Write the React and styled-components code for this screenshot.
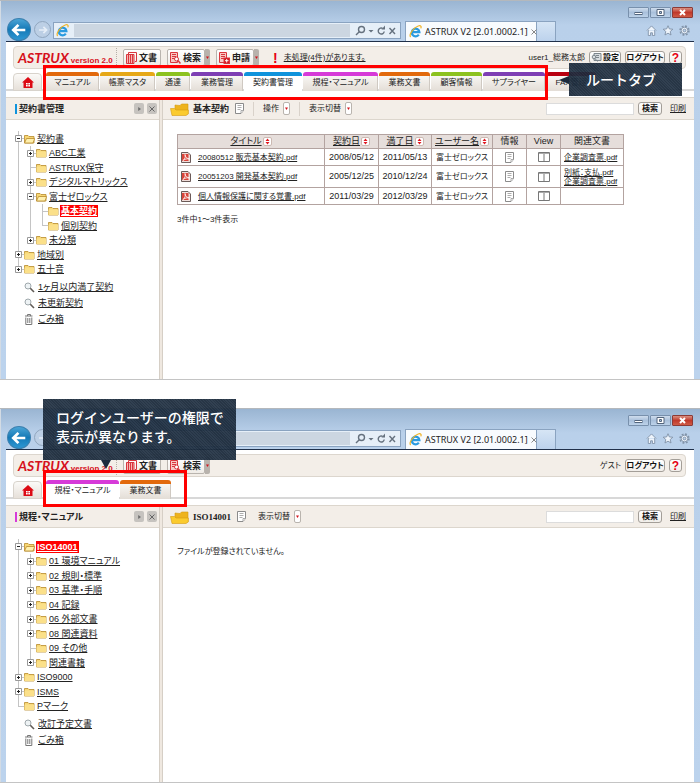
import React from 'react'
import styled, { createGlobalStyle, css } from 'styled-components'

const GlobalStyle = createGlobalStyle`
    * {
        box-sizing: border-box;
    }
    body {
        margin: 0;
        background: #fff;
        color: #222;
        font-family: 'Liberation Sans', 'Noto Sans CJK JP', sans-serif;
        font-size: 8px;
        line-height: 12px;
        font-feature-settings: 'palt';
    }
    button, input {
        font: inherit;
        color: inherit;
        font-feature-settings: inherit;
        margin: 0;
        padding: 0;
    }
    a {
        color: inherit;
    }
    svg {
        display: block;
        flex: none;
    }
`

const Page = styled.main`
    display: flex;
    flex-direction: column;
    gap: 28px;
`
const Browser = styled.section`
    position: relative;
    border-top: 1px solid #b4b8bc;
    border-bottom: 1px solid #c4c4c4;
    background: linear-gradient(#9ab5d2, #b9d0ea 24px, #bcd3ed);
    padding: 0 6px;
    box-shadow: inset 1px 0 #d3dbe4;
`
const TitleBar = styled.div`
    display: flex;
    justify-content: flex-end;
    gap: 1px;
    height: 17px;
    padding: 6px 1px 0 0;
`
const WindowButton = styled.button`
    display: flex;
    align-items: center;
    justify-content: center;
    width: 21px;
    height: 11px;
    border: 1px solid ${props => props.$close ? '#8d3a35' : '#7890ac'};
    border-radius: 1px;
    background: ${props => props.$close
        ? 'linear-gradient(#d98f80, #c0392b 50%, #cf5a45)'
        : 'linear-gradient(#cfdded, #a9c0db 50%, #bdd2e9)'};
`
const NavBar = styled.div`
    display: flex;
    align-items: flex-end;
    height: 23px;
`
const RoundButton = styled.button`
    flex: none;
    display: flex;
    align-items: center;
    justify-content: center;
    border-radius: 50%;
    ${props => props.$main ? css`
        width: 24px;
        height: 23px;
        margin: 0 3px 0 1px;
        border: 1px solid #3a7fae;
        background: linear-gradient(#4aa4d6, #1679b6 50%, #2d97d3);
    ` : css`
        width: 17px;
        height: 17px;
        margin: 0 2px 3px 0;
        border: 1px solid #91a6be;
        background: #bccfe5;
    `}
`
const AddressBar = styled.div`
    flex: 1;
    display: flex;
    align-items: center;
    gap: 5px;
    height: 17px;
    margin: 0 4px 2px 0;
    padding: 0 4px 0 2px;
    border: 1px solid #8aa3c0;
    background: #e6eff8;
`
const AddressInput = styled.input`
    flex: 1;
    min-width: 0;
    height: 13px;
    border: 0;
    background: #ccd6e1;
`
const BrowserTab = styled.div`
    display: flex;
    align-items: center;
    gap: 3px;
    width: 132px;
    height: 20px;
    padding: 0 4px 0 3px;
    border: 1px solid #8aa3c0;
    border-bottom: 0;
    background: #f8fbfe;
    font: 9px 'Noto Sans', sans-serif;
    white-space: nowrap;
    svg:last-child {
        margin-left: auto;
    }
`
const NewTab = styled.button`
    width: 19px;
    height: 20px;
    border: 1px solid #8aa3c0;
    border-width: 1px 1px 0 0;
    background: linear-gradient(#d6e5f5, #bcd2ec);
`
const BrowserTools = styled.div`
    display: flex;
    gap: 5px;
    padding: 0 4px 5px 90px;
`

const AppBody = styled.div`
    border-top: 1px solid #20304a;
    background: #fff;
    padding-top: 4px;
`
const Header = styled.header`
    display: flex;
    align-items: center;
    height: 23px;
    margin: 0 8px 3px 7px;
    padding: 0 3px 0 4px;
    border: 1px solid #dcd6ce;
    border-radius: 4px;
    background: #f3eee8;
`
const Logo = styled.div`
    display: flex;
    align-items: baseline;
    gap: 2px;
    width: 99px;
    height: 19px;
    border-right: 1px dotted #b5afa8;
    color: #d6101c;
    white-space: nowrap;
    font: bold 8px/19px 'Liberation Sans', sans-serif;
    em {
        font: italic bold 14px/19px Lato, sans-serif;
    }
`
const ToolGroup = styled.div`
    display: flex;
    margin-left: 6px;
`
const ToolButton = styled.button`
    display: flex;
    align-items: center;
    gap: 2px;
    width: 38px;
    height: 17px;
    padding-left: 2px;
    border: 1px solid #b9b4ae;
    border-radius: 2px;
    background: linear-gradient(#fff, #f0ece7);
    font-size: 9px;
    font-weight: bold;
    white-space: nowrap;
`
const ToolDrop = styled.button`
    display: flex;
    align-items: center;
    justify-content: center;
    width: 5px;
    height: 17px;
    border: 0;
    border-radius: 0 2px 2px 0;
    background: #b8b2ac;
`
const Notice = styled.div`
    display: flex;
    align-items: center;
    gap: 6px;
    margin-left: 14px;
    b {
        color: #e60012;
        font-size: 14px;
    }
`
const Account = styled.div`
    display: flex;
    align-items: center;
    gap: 4px;
    margin-left: auto;
`
const SmallButton = styled.button`
    display: flex;
    align-items: center;
    justify-content: center;
    gap: 1px;
    width: ${props => props.$width}px;
    height: 13px;
    border: 1px solid #a39e98;
    border-radius: 3px;
    background: linear-gradient(#fff, #f1eeea);
    color: ${props => props.$help ? '#e60012' : '#111'};
    font-size: ${props => props.$help ? 12 : 8}px;
    font-weight: bold;
    white-space: nowrap;
`

const TabBar = styled.nav`
    display: flex;
    gap: 1px;
    height: 19px;
    margin-bottom: 6px;
    padding-left: 7px;
    background: linear-gradient(#d8d8d8, #d8d8d8) bottom / 100% 2px no-repeat;
`
const HomeTab = styled.a`
    display: flex;
    align-items: center;
    justify-content: center;
    width: 29px;
    margin: 1px 3px 0 0;
    border: 1px solid #d8d3cc;
    border-radius: 4px 4px 0 0;
    background: linear-gradient(#fbfaf8, #e6e0d9);
`
const RootTab = styled.a`
    width: ${props => props.$width}px;
    border-top: 4px solid ${props => props.$color};
    border-radius: 3px 3px 0 0;
    background: ${props => props.$active ? '#fff' : 'linear-gradient(#f8f6f3, #e3ddd6)'};
    box-shadow: ${props => props.$active ? 'none' : 'inset -1px 0 #cfc9c2'};
    line-height: 14px;
    text-align: center;
    text-decoration: none;
    white-space: nowrap;
`

const Panes = styled.div`
    display: grid;
    grid-template-columns: 153px 4px 1fr;
    min-height: ${props => props.$height}px;
`
const Divider = styled.div`
    border: 1px solid #d6cfc6;
    border-width: 0 1px;
    background: #efe8e0;
`
const PaneHead = styled.div`
    display: flex;
    align-items: center;
    height: 23px;
    border: 1px solid #dcd6cd;
    border-width: 1px 0;
    background: #f3eee8;
    white-space: nowrap;
`
const SideHead = styled(PaneHead)`
    gap: 3px;
    padding: 0 2px 0 9px;
    h2 {
        flex: 1;
        margin: 0;
        padding-left: 2px;
        border-left: 2px solid ${props => props.$color};
        font-size: 9px;
        line-height: 10px;
    }
`
const SideButton = styled.button`
    display: flex;
    align-items: center;
    justify-content: center;
    width: 10px;
    height: 11px;
    border: 0;
    border-radius: 2px;
    background: #c6c3bf;
`
const MainHead = styled(PaneHead)`
    padding: 0 8px 0 7px;
    h3 {
        margin: 0 6px 0 4px;
        font-size: 9px;
        font-family: ${props => props.$serif ? "'Liberation Serif', " : ''}'Liberation Sans', 'Noto Sans CJK JP', sans-serif;
    }
`
const MenuLabel = styled.div`
    display: flex;
    align-items: center;
    gap: 4px;
    height: 14px;
    margin-left: 9px;
    padding-left: ${props => props.$plain ? 2 : 9}px;
    border-left: 1px solid ${props => props.$plain ? 'transparent' : '#d9d2ca'};
`
const MenuButton = styled.button`
    display: flex;
    align-items: center;
    justify-content: center;
    width: 7px;
    height: 13px;
    border: 1px solid #b9b4ae;
    border-radius: 2px;
    background: #fff;
`
const SearchForm = styled.form`
    display: flex;
    align-items: center;
    gap: 4px;
    margin-left: auto;
    a {
        margin-left: 4px;
    }
`
const SearchInput = styled.input`
    width: 88px;
    height: 12px;
    border: 1px solid #dcdcdc;
    background: #fff;
`

const Tree = styled.ul`
    margin: 0;
    padding: 11px 0 0 6px;
    list-style: none;
    font-size: 9px;
    white-space: nowrap;
`
const TreeRow = styled.li`
    display: flex;
    align-items: center;
    height: 15px;
    &:nth-child(even) {
        height: 14px;
    }
`
const Guide = styled.span`
    display: flex;
    align-items: center;
    justify-content: center;
    align-self: stretch;
    width: 12px;
    background-image: linear-gradient(#c4c4c4, #c4c4c4), linear-gradient(#c4c4c4, #c4c4c4);
    background-repeat: no-repeat;
    background-position: 6px 0, 6px 50%;
    background-size: 1px ${props => props.$end ? '50%' : '100%'}, ${props => props.$branch ? 6 : 0}px 1px;
`
const Toggle = styled.button`
    display: flex;
    width: 7px;
    height: 7px;
    border: 0;
    background: #fff;
`
const TreeLink = styled.a`
    margin-left: 1px;
    padding: 0 1px;
    line-height: 12px;
    ${props => props.$selected && css`
        background: #f00;
        color: #fff;
        font-weight: bold;
    `}
`
const Extras = styled.ul`
    margin: 3px 0 0;
    padding: 0 0 0 18px;
    list-style: none;
    font-size: 9px;
    li {
        display: flex;
        align-items: center;
        gap: 3px;
        height: 16px;
    }
`

const MainBody = styled.div`
    padding: 14px 14px 0;
`
const DocTable = styled.table`
    width: 447px;
    border-collapse: collapse;
    table-layout: fixed;
    font-size: 9px;
    line-height: 9px;
    white-space: nowrap;
    th, td {
        height: 17px;
        padding: 0;
        border: 1px solid #b3a3a0;
        text-align: center;
        font-weight: normal;
    }
    th {
        height: 14px;
        background: #e6dedb;
    }
    tbody tr:nth-child(2) td {
        height: 22px;
    }
    td svg {
        margin: 0 auto;
    }
    td:nth-child(4), td:last-child {
        font-size: 8px;
    }
    td:last-child {
        padding-left: 3px;
        text-align: left;
    }
    td:last-child a {
        display: block;
    }
`
const HeadCell = styled.span`
    display: flex;
    align-items: center;
    justify-content: center;
    gap: 1px;
`
const FileCell = styled.div`
    display: flex;
    gap: 7px;
    padding-left: 3px;
    align-items: center;
    font-size: 8px;
    td & svg {
        margin: 0;
    }
`
const SortButton = styled.button`
    display: flex;
    align-items: center;
    justify-content: center;
    width: 9px;
    height: 9px;
    border: 1px solid #cbb9b2;
    border-radius: 2px;
    background: #fff;
`
const Summary = styled.p`
    margin: ${props => props.$top}px 0 0;
`

const Frame = styled.div`
    position: absolute;
    left: 43px;
    top: ${props => props.$top}px;
    width: ${props => props.$width}px;
    height: ${props => props.$height}px;
    border: 3px solid #f00;
    pointer-events: none;
`
const Callout = styled.div`
    position: absolute;
    background: repeating-linear-gradient(45deg, rgba(26, 41, 58, 0.94) 0 1px, rgba(34, 50, 68, 0.93) 1px 2px);
    color: #fff;
    font: 500 14px/19px 'Noto Sans CJK JP', sans-serif;
    font-feature-settings: normal;
    white-space: nowrap;
    &::after {
        content: '';
        position: absolute;
        border: 5px solid transparent;
    }
    ${props => props.$side === 'left' ? css`
        left: 569px;
        top: 62px;
        padding: 7px 26px 7px 17px;
        &::after {
            right: 100%;
            top: 13px;
            border-width: 4px 10px 4px 0;
            border-right-color: #1b2a3c;
        }
    ` : css`
        left: 43px;
        top: -10px;
        padding: 9px 12px 14px 13px;
        &::after {
            left: 58px;
            top: 100%;
            border-width: 9px 5px 0;
            border-top-color: #1b2a3c;
        }
    `}
`

const IeIcon = () => (
    <svg width="13" height="13" viewBox="0 0 13 13" fill="none">
        <path d="M3 7.2h7.4A3.8 3.8 0 1 0 9.8 9.6" stroke="#2a9be0" strokeWidth="2.2" />
        <path d="M1.6 12C-.3 9.8 4.3 2.6 9.2 1c2.6-.9 3.4.4 2.6 2.4" stroke="#f0b323" strokeWidth="1.2" />
    </svg>
)
const SearchGlyph = () => (
    <svg width="41" height="12" viewBox="0 0 41 12" fill="none" stroke="#65717e" strokeWidth="1.4">
        <circle cx="6.5" cy="4.5" r="3" />
        <path d="M4.3 6.7L1 10" />
        <path d="M13.5 5h5l-2.5 2.5z" fill="#65717e" stroke="none" />
        <path d="M29.2 6.5a3 3 0 1 1-1.4-3" />
        <path d="M26.5 4.5h3.5v-4z" fill="#65717e" stroke="none" />
        <path d="M34.5 3l5.5 6M40 3l-5.5 6" />
    </svg>
)
const Arrow = ({ size, color, flip }) => (
    <svg width={size} height={size} viewBox="0 0 14 14" fill="none" stroke={color} strokeWidth="2.4">
        <path d={flip ? 'M1.5 7h10.5M7.5 2.5L12 7l-4.5 4.5' : 'M12.5 7H2M6.5 2.5L2 7l4.5 4.5'} />
    </svg>
)
const WindowGlyph = ({ kind }) => (
    <svg width="9" height="7" viewBox="0 0 9 7" fill="#fff" stroke="#53657c" strokeWidth="1">
        {kind === 'min' && <rect x="1" y="3.5" width="7" height="2" />}
        {kind === 'max' && <path d="M1 .5h7v6H1zM3.5 2.5v2h2v-2z" fillRule="evenodd" />}
        {kind === 'close' && <path d="M2 1l5 5M7 1L2 6" stroke="#fff" strokeWidth="2" />}
    </svg>
)
const ToolGlyphs = () => (
    <>
        <svg width="11" height="11" viewBox="0 0 12 12" fill="#eef4fb" stroke="#8193a8">
            <path d="M1 6l5-5 5 5M2.5 5.5v6H5v-3h2v3h2.5v-6" />
        </svg>
        <svg width="12" height="11" viewBox="0 0 12 12" fill="#eef4fb" stroke="#8193a8">
            <path d="M6 .8l1.5 3.5 3.8.3-2.9 2.5.9 3.8L6 8.9l-3.3 2 .9-3.8L.7 4.6l3.8-.3z" />
        </svg>
        <svg width="11" height="11" viewBox="0 0 12 12" fill="none" stroke="#8193a8">
            <circle cx="6" cy="6" r="4.7" strokeWidth="2" strokeDasharray="2 1.7" />
            <circle cx="6" cy="6" r="3.6" fill="#eef4fb" />
            <circle cx="6" cy="6" r="1.5" fill="#bcd2ec" />
        </svg>
    </>
)
const HomeIcon = () => (
    <svg width="12" height="11" viewBox="0 0 12 11" fill="#dc0a14">
        <path d="M6 0L0 5.5h1.5V11h9V5.5H12z" />
        <path d="M4 6h1.7v1.5H4zM6.3 6H8v1.5H6.3zM4 8h1.7v1.5H4zM6.3 8H8v1.5H6.3z" fill="#fff" />
    </svg>
)
const ToolIcon = ({ kind }) => (
    <svg width="11" height="12" viewBox="0 0 11 12" fill="none" stroke="#d9363e" strokeWidth="1">
        {kind === 'book' ? (
            <>
                <path d="M2.5 2V.5h8v9H9" />
                <path d="M.5 2.5h7.5v9H.5z" fill="#f6b5b2" />
                <path d="M2.5 3v8M4.5 3v8M6.5 3v8" />
            </>
        ) : (
            <>
                <path d="M.5.5h7v10h-7z" fill="#f8c9c4" />
                <path d="M2 2.5h4M2 4.5h4M2 6.5h3" />
            </>
        )}
        {kind === 'search' && (
            <>
                <circle cx="6.5" cy="7" r="2" fill="#fff" />
                <path d="M8 8.5l2.5 3" strokeWidth="1.5" />
            </>
        )}
        {kind === 'apply' && (
            <>
                <rect x="5" y="6" width="5.5" height="5.5" fill="#d3141c" />
                <path d="M6 8.7h3.5M7.7 7v3.5" stroke="#fff" />
            </>
        )}
    </svg>
)
const RedDot = () => (
    <svg width="3" height="3" viewBox="0 0 3 3"><path d="M0 .5h3L1.5 3z" fill="#d3141c" /></svg>
)
const SettingIcon = () => (
    <svg width="11" height="9" viewBox="0 0 11 9" fill="#d8dde0" stroke="#7d868c">
        <path d="M3 .5h7v7H3z" />
        <path d="M5 2.5h3M5 4.5h3" />
        <circle cx="3" cy="4" r="1.8" />
        <path d="M4 5.5L6.5 8.5" />
    </svg>
)
const BigFolder = () => (
    <svg width="19" height="14" viewBox="0 0 19 14" stroke="#d59a10" strokeWidth=".6">
        <path d="M5 3l5 .5 1.5-1.5H18v9.5H5z" fill="#eeb31c" />
        <path d="M.5 6.5h4L6 8h12.300v4L16 13.500H2z" fill="#fbcb2e" />
    </svg>
)
const Folder = ({ open }) => (
    <svg width="11" height="10" viewBox="0 0 11 10" stroke="#b78a2c" strokeWidth=".8">
        <path d="M.5 1.5h3.5l1 1h5v6.5H.5z" fill="#f7d774" />
        <path d={open ? 'M.5 9l2-4.5h8.2L9 9z' : 'M.5 3.5h9.5V9H.5z'} fill={open ? '#fff0ae' : '#fbe08a'} stroke={open ? '#b78a2c' : 'none'} />
    </svg>
)
const Note = () => (
    <svg width="9" height="11" viewBox="0 0 9 11" fill="#fff" stroke="#8b8b8b">
        <path d="M.5.5h8v7l-2.5 3H.5z" />
        <path d="M2.5 2.5h4M2.5 4.5h4M2.5 6.5h3M6 10V7.5h2.5" strokeWidth=".7" />
    </svg>
)
const Columns = () => (
    <svg width="12" height="10" viewBox="0 0 12 10" fill="#fff" stroke="#777">
        <path d="M.5.5h11v9H.5zM6 .5v9" />
        <path d="M1 1.5h10" stroke="#aaa" />
    </svg>
)
const Pdf = () => (
    <svg width="10" height="11" viewBox="0 0 10 11" fill="none">
        <path d="M.5.5h6.5l2.5 2.5v7.5h-9z" fill="#f0dcd8" stroke="#6b5a58" />
        <path d="M1 2h6.500v7H1z" fill="#d8443a" />
        <path d="M2 8.500C4.500 6.500 4.500 4.500 4 2.500c0 2.500 2 4 4.500 4.500-2.500-.5-4.500 0-6.500 1.500z" stroke="#fff" strokeWidth=".8" />
    </svg>
)
const SortIcon = () => (
    <svg width="5" height="7" viewBox="0 0 5 7" fill="#e01820"><path d="M.5 3l2-2.5 2 2.5zM.5 4l2 2.5 2-2.5z" /></svg>
)
const Lens = () => (
    <svg width="11" height="11" viewBox="0 0 11 11" fill="#eef3f5" stroke="#9fa8ac">
        <circle cx="4" cy="4" r="3" />
        <path d="M6.3 6.3L10 10" stroke="#5f5a55" strokeWidth="1.6" />
    </svg>
)
const Trash = () => (
    <svg width="11" height="11" viewBox="0 0 11 11" fill="none" stroke="#777">
        <path d="M1 2h7.500M3.500 2V.5h3V2M1.800 3.500v7h6v-7M3.800 4v5M5.800 4v5" />
    </svg>
)
const ToggleIcon = ({ open }) => (
    <svg width="7" height="7" viewBox="0 0 7 7" fill="#fff" stroke="#999">
        <path d="M.5.5h6v6h-6z" />
        <path d={open ? 'M2 3.5h3' : 'M2 3.5h3M3.5 2v3'} stroke="#222" />
    </svg>
)
const SideGlyph = ({ close }) => (
    <svg width="8" height="8" viewBox="0 0 8 8" fill="#666" stroke="#666">
        {close ? <path d="M1.5 1.5l5 5M6.5 1.5l-5 5" /> : <path d="M3.5 2.5v3L5.5 4z" strokeWidth=".5" />}
    </svg>
)

// guides: one letter per level, "|" passes by, "+" branches, "L" is the last branch
const contractTree = [
    { guides: '+', toggle: 'open', name: '契約書' },
    { guides: '|+', toggle: 'closed', name: 'ABC工業' },
    { guides: '|+', name: 'ASTRUX保守' },
    { guides: '|+', toggle: 'closed', name: 'デジタルマトリックス' },
    { guides: '|+', toggle: 'open', name: '富士ゼロックス' },
    { guides: '||+', name: '基本契約', selected: true },
    { guides: '||L', name: '個別契約' },
    { guides: '|L', toggle: 'closed', name: '未分類' },
    { guides: '+', toggle: 'closed', name: '地域別' },
    { guides: 'L', toggle: 'closed', name: '五十音' }
]
const manualTree = [
    { guides: '+', toggle: 'open', name: 'ISO14001', selected: true },
    { guides: '|+', toggle: 'closed', name: '01 環境マニュアル' },
    { guides: '|+', toggle: 'closed', name: '02 規則・標準' },
    { guides: '|+', toggle: 'closed', name: '03 基準・手順' },
    { guides: '|+', toggle: 'closed', name: '04 記録' },
    { guides: '|+', toggle: 'closed', name: '06 外部文書' },
    { guides: '|+', toggle: 'closed', name: '08 関連資料' },
    { guides: '|+', name: '09 その他' },
    { guides: '|L', toggle: 'closed', name: '関連書籍' },
    { guides: '+', toggle: 'closed', name: 'ISO9000' },
    { guides: '+', toggle: 'closed', name: 'ISMS' },
    { guides: 'L', name: 'Pマーク' }
]

const contractTabs = [
    { name: 'マニュアル', color: '#e2690c', width: 53 },
    { name: '帳票マスタ', color: '#e6a817', width: 55 },
    { name: '通達', color: '#8cc21f', width: 34 },
    { name: '業務管理', color: '#7e3fb4', width: 52 },
    { name: '契約書管理', color: '#0f93dc', width: 58, active: true },
    { name: '規程・マニュアル', color: '#d63ad8', width: 75 },
    { name: '業務文書', color: '#e2690c', width: 51 },
    { name: '顧客情報', color: '#8cc21f', width: 51 },
    { name: 'サプライヤー', color: '#7e3fb4', width: 62 },
    { name: 'FAX管理', color: '#b80010', width: 50 }
]
const manualTabs = [
    { name: '規程・マニュアル', color: '#d63ad8', width: 73, active: true },
    { name: '業務文書', color: '#e2690c', width: 51 }
]

const contracts = [
    { title: '20080512 販売基本契約.pdf', start: '2008/05/12', end: '2011/05/13', related: ['企業調査票.pdf'] },
    { title: '20051203 開発基本契約.pdf', start: '2005/12/25', end: '2010/12/24', related: ['別紙：支払.pdf', '企業調査票.pdf'] },
    { title: '個人情報保護に関する覚書.pdf', start: '2011/03/29', end: '2012/03/29', related: [] }
]

const BrowserChrome = () => (
    <>
        <TitleBar>
            <WindowButton aria-label="最小化"><WindowGlyph kind="min" /></WindowButton>
            <WindowButton aria-label="最大化"><WindowGlyph kind="max" /></WindowButton>
            <WindowButton $close aria-label="閉じる"><WindowGlyph kind="close" /></WindowButton>
        </TitleBar>
        <NavBar>
            <RoundButton $main aria-label="戻る"><Arrow size={16} color="#fff" /></RoundButton>
            <RoundButton aria-label="進む"><Arrow size={10} color="#e6eef7" flip /></RoundButton>
            <AddressBar>
                <IeIcon />
                <AddressInput aria-label="アドレス" />
                <SearchGlyph />
            </AddressBar>
            <BrowserTab>
                <IeIcon />
                ASTRUX V2 [2.01.0002.1]
                <svg width="6" height="6" viewBox="0 0 6 6" stroke="#888"><path d="M.5.5l5 5M5.5.5l-5 5" /></svg>
            </BrowserTab>
            <NewTab aria-label="新しいタブ" />
            <BrowserTools><ToolGlyphs /></BrowserTools>
        </NavBar>
    </>
)

const AppHeader = ({ admin, user }) => (
    <Header>
        <Logo><em>ASTRUX</em>version 2.0</Logo>
        <ToolGroup><ToolButton><ToolIcon kind="book" />文書</ToolButton></ToolGroup>
        <ToolGroup>
            <ToolButton><ToolIcon kind="search" />検索</ToolButton>
            <ToolDrop aria-label="検索メニュー"><RedDot /></ToolDrop>
        </ToolGroup>
        {admin && (
            <>
                <ToolGroup>
                    <ToolButton><ToolIcon kind="apply" />申請</ToolButton>
                    <ToolDrop aria-label="申請メニュー"><RedDot /></ToolDrop>
                </ToolGroup>
                <Notice><b>!</b><a href="#pending">未処理(4件)があります。</a></Notice>
            </>
        )}
        <Account>
            <span>{user}</span>
            {admin && <SmallButton $width={32}><SettingIcon />設定</SmallButton>}
            <SmallButton $width={40}>ログアウト</SmallButton>
            <SmallButton $width={13} $help>?</SmallButton>
        </Account>
    </Header>
)

const RootTabs = ({ tabs }) => (
    <TabBar>
        <HomeTab href="#home" aria-label="ホーム"><HomeIcon /></HomeTab>
        {tabs.map(tab => (
            <RootTab key={tab.name} href="#tab" $width={tab.width} $color={tab.color} $active={tab.active}>
                {tab.name}
            </RootTab>
        ))}
    </TabBar>
)

const Sidebar = ({ title, color, tree, searches }) => (
    <aside>
        <SideHead $color={color}>
            <h2>{title}</h2>
            <SideButton aria-label="広げる"><SideGlyph /></SideButton>
            <SideButton aria-label="閉じる"><SideGlyph close /></SideButton>
        </SideHead>
        <Tree>
            {tree.map(node => (
                <TreeRow key={node.name}>
                    {node.guides.split('').map((guide, i) => (
                        <Guide key={i} $branch={guide !== '|'} $end={guide === 'L'}>
                            {node.toggle && guide !== '|' && (
                                <Toggle aria-label="開閉"><ToggleIcon open={node.toggle === 'open'} /></Toggle>
                            )}
                        </Guide>
                    ))}
                    <Folder open={node.toggle === 'open'} />
                    <TreeLink href="#folder" $selected={node.selected}>{node.name}</TreeLink>
                </TreeRow>
            ))}
        </Tree>
        <Extras>
            {searches.map(name => (
                <li key={name}><Lens /><a href="#search">{name}</a></li>
            ))}
            <li><Trash /><a href="#trash">ごみ箱</a></li>
        </Extras>
    </aside>
)

const MainToolbar = ({ title, menus, serif }) => (
    <MainHead $serif={serif}>
        <BigFolder />
        <h3>{title}</h3>
        <Note />
        {menus.map(name => (
            <MenuLabel key={name} $plain={serif}>
                {name}
                <MenuButton aria-label={name}><RedDot /></MenuButton>
            </MenuLabel>
        ))}
        <SearchForm>
            <SearchInput aria-label="検索語" />
            <SmallButton type="button" $width={24}>検索</SmallButton>
            <a href="#print">印刷</a>
        </SearchForm>
    </MainHead>
)

const SortHead = ({ children }) => (
    <th>
        <HeadCell>
            <a href="#sort">{children}</a>
            <SortButton aria-label="並べ替え"><SortIcon /></SortButton>
        </HeadCell>
    </th>
)

const ContractTable = () => (
    <DocTable>
        <colgroup>
            {[147, 54, 53, 61, 34, 34, 63].map((width, i) => <col key={i} width={width} />)}
        </colgroup>
        <thead>
            <tr>
                <SortHead>タイトル</SortHead>
                <SortHead>契約日</SortHead>
                <SortHead>満了日</SortHead>
                <SortHead>ユーザー名</SortHead>
                <th>情報</th>
                <th>View</th>
                <th>関連文書</th>
            </tr>
        </thead>
        <tbody>
            {contracts.map(doc => (
                <tr key={doc.title}>
                    <td><FileCell><Pdf /><a href="#doc">{doc.title}</a></FileCell></td>
                    <td>{doc.start}</td>
                    <td>{doc.end}</td>
                    <td>富士ゼロックス</td>
                    <td><Note /></td>
                    <td><Columns /></td>
                    <td>{doc.related.map(name => <a key={name} href="#related">{name}</a>)}</td>
                </tr>
            ))}
        </tbody>
    </DocTable>
)

export default () => (
    <Page>
        <GlobalStyle />
        <Browser>
            <BrowserChrome />
            <AppBody>
                <AppHeader admin user="user1_総務太郎" />
                <RootTabs tabs={contractTabs} />
                <Panes $height={282}>
                    <Sidebar
                        title="契約書管理"
                        color="#0f93dc"
                        tree={contractTree}
                        searches={['1ヶ月以内満了契約', '未更新契約']}
                    />
                    <Divider />
                    <section>
                        <MainToolbar title="基本契約" menus={['操作', '表示切替']} />
                        <MainBody>
                            <ContractTable />
                            <Summary $top={9}>3件中1～3件表示</Summary>
                        </MainBody>
                    </section>
                </Panes>
            </AppBody>
            <Frame $top={64} $width={505} $height={35} />
            <Callout $side="left">ルートタブ</Callout>
        </Browser>
        <Browser>
            <BrowserChrome />
            <AppBody>
                <AppHeader user="ゲスト" />
                <RootTabs tabs={manualTabs} />
                <Panes $height={277}>
                    <Sidebar
                        title="規程・マニュアル"
                        color="#d63ad8"
                        tree={manualTree}
                        searches={['改訂予定文書']}
                    />
                    <Divider />
                    <section>
                        <MainToolbar title="ISO14001" menus={['表示切替']} serif />
                        <MainBody>
                            <Summary $top={4}>ファイルが登録されていません。</Summary>
                        </MainBody>
                    </section>
                </Panes>
            </AppBody>
            <Frame $top={61} $width={144} $height={37} />
            <Callout $side="bottom">ログインユーザーの権限で<br />表示が異なります。</Callout>
        </Browser>
    </Page>
)
